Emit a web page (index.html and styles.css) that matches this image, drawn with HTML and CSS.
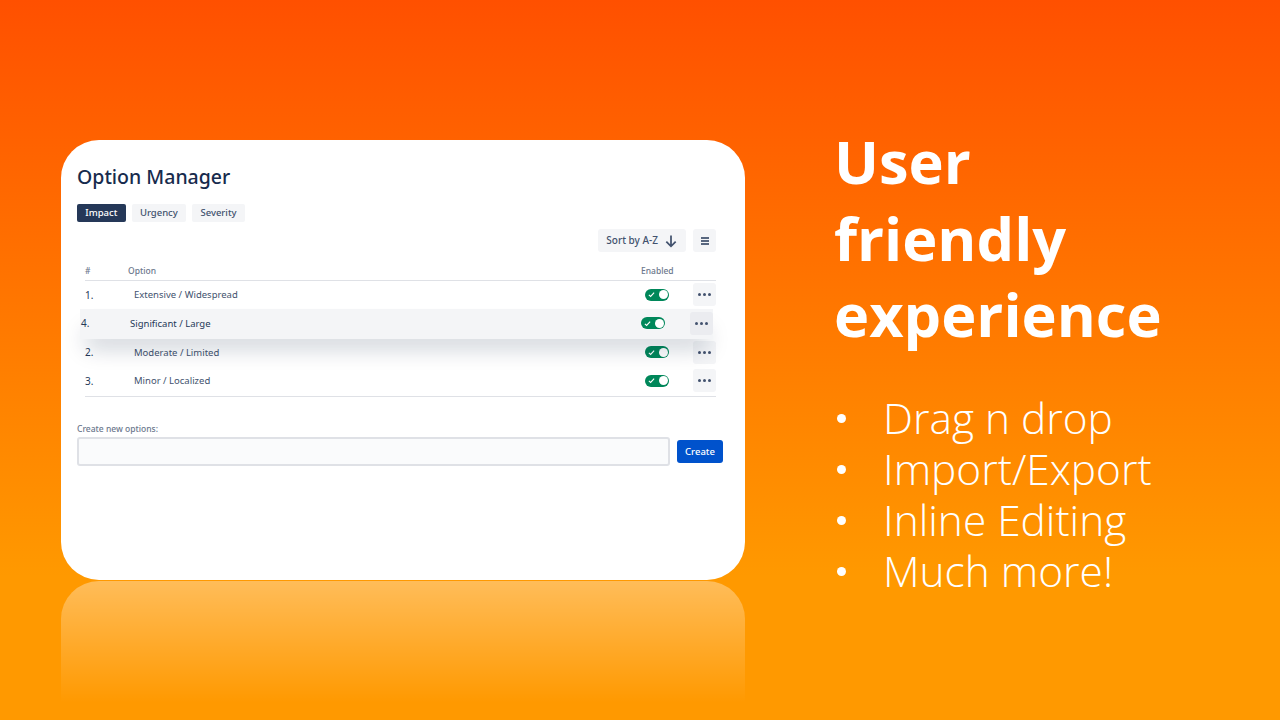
FILE: index.html
```html
<!DOCTYPE html>
<html lang="en">
<head>
<meta charset="utf-8">
<title>Option Manager</title>
<link rel="stylesheet" href="styles.css">
</head>
<body>
<main class="slide">
  <section class="left">
    <div class="card">
      <h1 class="title">Option Manager</h1>
      <div class="tabs">
        <span class="tab active">Impact</span>
        <span class="tab">Urgency</span>
        <span class="tab">Severity</span>
      </div>
      <div class="tools">
        <span class="sort"><span class="sort-text">Sort by A-Z</span>
          <svg class="sort-icon" viewBox="0 0 12 12"><path d="M6 1.2V10.4M2 6.6 6 10.6 10 6.6" fill="none" stroke="#42526e" stroke-width="1.5"/></svg>
        </span>
        <span class="square">
          <svg class="menu-icon" viewBox="0 0 10 10"><path d="M1 2h8M1 5h8M1 8h8" stroke="#253858" stroke-width="1.3"/></svg>
        </span>
      </div>
      <div class="table">
        <div class="row head"><span>#</span><span>Option</span><span class="center">Enabled</span></div>
        <div class="row item">
          <span class="num">1.</span><span class="name">Extensive / Widespread</span>
          <span class="toggle"><svg class="check" viewBox="0 0 8 8"><path d="M1 4.4 3 6.2 7 1.8" fill="none" stroke="#fff" stroke-width="1.3"/></svg><i class="knob"></i></span>
          <span></span>
          <span class="square dots"><i></i><i></i><i></i></span>
        </div>
        <div class="row item dragged">
          <span class="num">4.</span><span class="name">Significant / Large</span>
          <span class="toggle"><svg class="check" viewBox="0 0 8 8"><path d="M1 4.4 3 6.2 7 1.8" fill="none" stroke="#fff" stroke-width="1.3"/></svg><i class="knob"></i></span>
          <span></span>
          <span class="square dots dark"><i></i><i></i><i></i></span>
        </div>
        <div class="row item">
          <span class="num">2.</span><span class="name">Moderate / Limited</span>
          <span class="toggle"><svg class="check" viewBox="0 0 8 8"><path d="M1 4.4 3 6.2 7 1.8" fill="none" stroke="#fff" stroke-width="1.3"/></svg><i class="knob"></i></span>
          <span></span>
          <span class="square dots"><i></i><i></i><i></i></span>
        </div>
        <div class="row item last">
          <span class="num">3.</span><span class="name">Minor / Localized</span>
          <span class="toggle"><svg class="check" viewBox="0 0 8 8"><path d="M1 4.4 3 6.2 7 1.8" fill="none" stroke="#fff" stroke-width="1.3"/></svg><i class="knob"></i></span>
          <span></span>
          <span class="square dots"><i></i><i></i><i></i></span>
        </div>
      </div>
      <div class="create-label">Create new options:</div>
      <div class="create">
        <div class="input"></div>
        <span class="create-btn">Create</span>
      </div>
    </div>
    <div class="reflection"></div>
  </section>
  <section class="right">
    <h2 class="headline">User<br>friendly<br>experience</h2>
    <ul class="points">
      <li>Drag n drop</li>
      <li>Import/Export</li>
      <li>Inline Editing</li>
      <li>Much more!</li>
    </ul>
  </section>
</main>
</body>
</html>
```
FILE: styles.css
```css
* { box-sizing: border-box; }
html, body { margin: 0; height: 100%; }
.slide {
  width: 1280px;
  height: 720px;
  overflow: hidden;
  display: flex;
  background: linear-gradient(180deg, #ff5000 0%, #ff9900 80%);
  font-family: "Noto Sans", sans-serif;
}
.left { margin: 140px 0 0 61px; width: 684px; }
.card {
  height: 440px;
  background: #fff;
  border-radius: 38px;
  padding: 23px 22px 0 16px;
  color: #42526e;
}
.title {
  margin: 0;
  font-size: 19.5px;
  line-height: 28px;
  font-weight: 500;
  color: #172b4d;
}
.tabs { display: flex; gap: 6px; margin-top: 13px; }
.tab {
  height: 18px;
  padding: 0 8.3px;
  border-radius: 2px;
  background: #f4f5f7;
  font-size: 9.5px;
  line-height: 17px;
  font-weight: 500;
  color: #42526e;
}
.tab.active { background: #253858; color: #fff; }
.tools { display: flex; justify-content: flex-end; gap: 7px; margin: 7px 7px 0 0; }
.sort {
  display: flex;
  align-items: center;
  gap: 6px;
  height: 23px;
  padding: 0 8px;
  background: #f4f5f7;
  border-radius: 3px;
  font-size: 10px;
  font-weight: 500;
  color: #42526e;
}
.sort-text { margin-top: -2px; }
.sort-icon { width: 14px; height: 14px; }
.square {
  display: flex;
  align-items: center;
  justify-content: center;
  width: 23px;
  height: 23px;
  background: #f4f5f7;
  border-radius: 3px;
}
.menu-icon { width: 10px; height: 10px; }
.table { margin: 12px 0 0 8px; width: 631px; }
.row {
  display: grid;
  grid-template-columns: 43px 1fr 32px 20px 23px;
  align-items: center;
}
.head {
  height: 17px;
  border-bottom: 1.5px solid #dfe1e6;
  font-size: 8.5px;
  font-weight: 500;
  color: #6b778c;
  padding-bottom: 3px;
}
.center { text-align: center; }
.item { height: 28.7px; font-size: 9.5px; color: #42526e; padding-bottom: 1px; }
.num { font-size: 10px; color: #253858; }
.name { padding-left: 6px; }
.dragged {
  position: relative;
  left: -5px;
  top: -1px;
  width: 633px;
  height: 30px;
  margin-bottom: -1.3px;
  padding-left: 1px;
  background: #f4f5f7;
  box-shadow: 0 15px 22px -6px rgba(9, 30, 66, .22);
  color: #253858;
  grid-template-columns: 43px 1fr 32px 21px 23px;
}
.last { height: 29.7px; border-bottom: 1px solid #dfe1e6; }
.toggle {
  justify-self: center;
  display: flex;
  align-items: center;
  justify-content: space-between;
  width: 24px;
  height: 12px;
  padding: 0 1.5px 0 3px;
  border-radius: 6px;
  background: #00875a;
}
.check { width: 7px; height: 7px; }
.knob { width: 9px; height: 9px; border-radius: 50%; background: #fff; }
.dots { gap: 2px; }
.dots i { width: 3px; height: 3px; border-radius: 50%; background: #42526e; }
.dots.dark { background: #ebecf0; }
.create-label {
  margin-top: 26px;
  font-size: 8.5px;
  line-height: 12px;
  font-weight: 500;
  color: #6b778c;
}
.create { display: flex; align-items: center; gap: 7px; margin-top: 2px; }
.input {
  width: 593px;
  height: 29px;
  background: #fafbfc;
  border: 2px solid #dfe1e6;
  border-radius: 3px;
}
.create-btn {
  width: 46px;
  height: 23px;
  border-radius: 3px;
  background: #0052cc;
  color: #fff;
  font-size: 9.5px;
  line-height: 23px;
  font-weight: 500;
  text-align: center;
}
.reflection {
  height: 122px;
  margin-top: 1px;
  border-radius: 38px 38px 0 0;
  background: linear-gradient(180deg, rgba(255, 255, 255, .35), rgba(255, 255, 255, 0));
}
.right {
  margin: 123px 0 0 89px;
  color: #fff;
  font-family: "Open Sans", sans-serif;
}
.headline {
  margin: 0;
  font-size: 59.5px;
  line-height: 76.5px;
  font-weight: 700;
  white-space: nowrap;
}
.points {
  margin: 39px 0 0;
  padding: 0;
  list-style: none;
  font-size: 42.4px;
  line-height: 51px;
  font-weight: 300;
}
.points li { position: relative; padding-left: 49px; white-space: nowrap; }
.points li::before {
  content: "";
  position: absolute;
  left: 3px;
  top: 22px;
  width: 9px;
  height: 9px;
  border-radius: 50%;
  background: #fff;
}
```
